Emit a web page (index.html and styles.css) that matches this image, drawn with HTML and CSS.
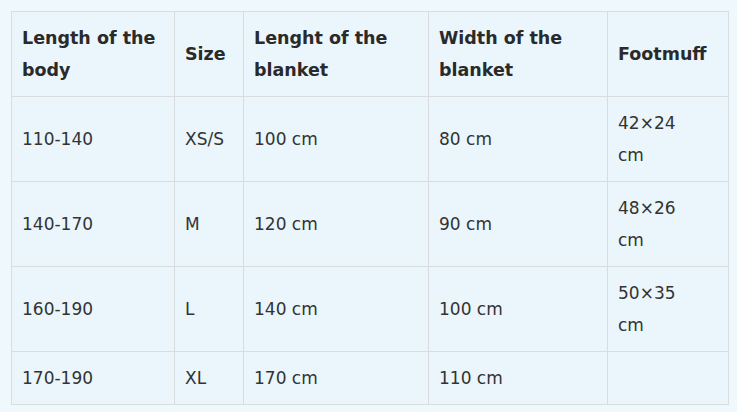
FILE: index.html
```html
<!DOCTYPE html>
<html lang="en">
<head>
<meta charset="utf-8">
<title>Size chart</title>
<link rel="stylesheet" href="styles.css">
</head>
<body>
<div class="wrap">
<table class="sizes">
  <colgroup>
    <col class="c1"><col class="c2"><col class="c3"><col class="c4"><col class="c5">
  </colgroup>
  <thead>
    <tr>
      <th>Length of the<br>body</th>
      <th>Size</th>
      <th>Lenght of the<br>blanket</th>
      <th>Width of the<br>blanket</th>
      <th>Footmuff</th>
    </tr>
  </thead>
  <tbody>
    <tr><td>110-140</td><td>XS/S</td><td>100 cm</td><td>80 cm</td><td>42×24<br>cm</td></tr>
    <tr><td>140-170</td><td>M</td><td>120 cm</td><td>90 cm</td><td>48×26<br>cm</td></tr>
    <tr><td>160-190</td><td>L</td><td>140 cm</td><td>100 cm</td><td>50×35<br>cm</td></tr>
    <tr><td>170-190</td><td>XL</td><td>170 cm</td><td>110 cm</td><td></td></tr>
  </tbody>
</table>
</div>
</body>
</html>
```

FILE: styles.css
```css
html, body {
  margin: 0;
  padding: 0;
  background: #eef8fd;
}
.wrap {
  padding: 11px 0 0 11px;
}
.sizes {
  border-collapse: collapse;
  table-layout: fixed;
  width: 717px;
  background: #eaf6fc;
  font-family: "DejaVu Sans", "Open Sans", sans-serif;
  font-size: 17.5px;
  line-height: 32px;
  color: #333;
}
.c1 { width: 163px; }
.c2 { width: 69px; }
.c3 { width: 185px; }
.c4 { width: 179px; }
.c5 { width: 121px; }
.sizes th,
.sizes td {
  border: 1px solid #d9dde0;
  padding: 10px 10px 10px 10px;
  text-align: left;
  vertical-align: middle;
  white-space: nowrap;
}
.sizes th {
  font-weight: 700;
  color: #2a2a2a;
  height: 64px;
}
.sizes td {
  font-size: 17px;
}
.sizes tbody tr:not(:last-child) td {
  height: 64px;
}
.sizes tbody tr:last-child td {
  height: 32px;
}
```
